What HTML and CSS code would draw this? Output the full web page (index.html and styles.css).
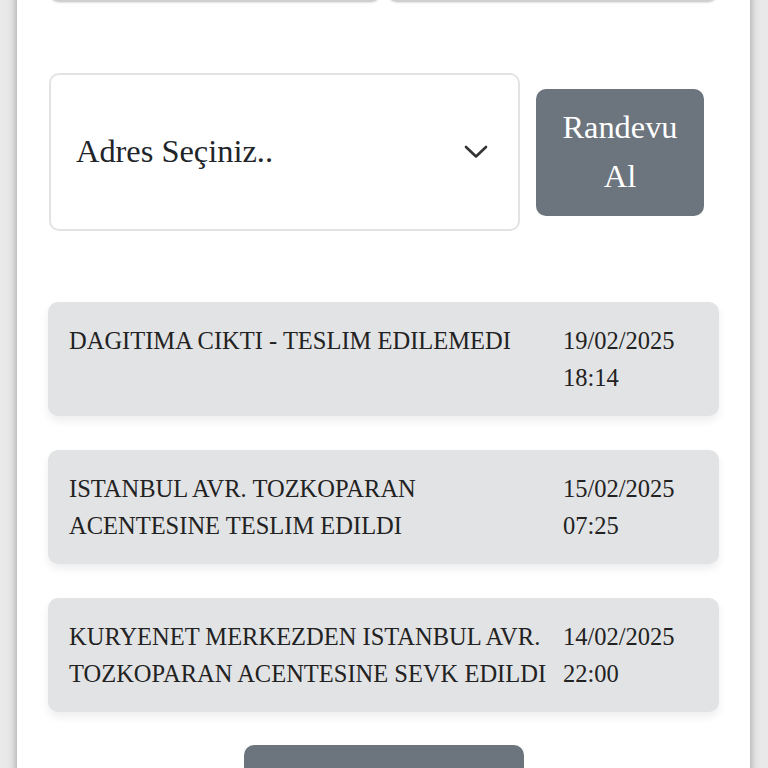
FILE: index.html
```html
<!DOCTYPE html>
<html lang="tr">
<head>
<meta charset="utf-8">
<title>Kargo Takip</title>
<link rel="stylesheet" href="styles.css">
</head>
<body>
<div class="page">
  <main class="card">
    <div class="top-row">
      <div class="field"></div>
      <div class="field"></div>
    </div>

    <div class="address-row">
      <div class="select">
        <span class="select-text">Adres Seçiniz..</span>
        <svg class="chevron" width="24" height="14" viewBox="0 0 24 14" aria-hidden="true">
          <path d="M2 2 L12 11.5 L22 2" fill="none" stroke="#333" stroke-width="2.6" stroke-linecap="round" stroke-linejoin="round"/>
        </svg>
      </div>
      <button class="btn-appointment">Randevu Al</button>
    </div>

    <ul class="events">
      <li class="event">
        <div class="event-desc">DAGITIMA CIKTI - TESLIM EDILEMEDI</div>
        <div class="event-date">19/02/2025<br>18:14</div>
      </li>
      <li class="event">
        <div class="event-desc">ISTANBUL AVR. TOZKOPARAN ACENTESINE TESLIM EDILDI</div>
        <div class="event-date">15/02/2025<br>07:25</div>
      </li>
      <li class="event">
        <div class="event-desc">KURYENET MERKEZDEN ISTANBUL AVR. TOZKOPARAN ACENTESINE SEVK EDILDI</div>
        <div class="event-date">14/02/2025<br>22:00</div>
      </li>
    </ul>

    <div class="bottom-row">
      <button class="btn-bottom"></button>
    </div>
  </main>
</div>
</body>
</html>
```

FILE: styles.css
```css
html, body {
  margin: 0;
  padding: 0;
  height: 768px;
  overflow: hidden;
  background: #e9e9e9;
  font-family: "Liberation Serif", "Times New Roman", serif;
  color: #212529;
}

.page {
  padding-left: 17px;
}

.card {
  width: 733px;
  min-height: 900px;
  box-sizing: border-box;
  background: #ffffff;
  padding: 0 31px;
  box-shadow: 0 0 9px rgba(0, 0, 0, 0.35);
}

.top-row {
  display: flex;
  gap: 6px;
  margin-top: -50px;
  padding: 0 1px 0 1px;
}

.field {
  flex: 1;
  height: 48px;
  border: 2px solid #cfcfcf;
  border-radius: 10px;
  box-shadow: 0 1px 2px rgba(0, 0, 0, 0.12);
}

.address-row {
  display: flex;
  align-items: center;
  margin-top: 71px;
}

.select {
  width: 471px;
  height: 158px;
  box-sizing: border-box;
  margin-left: 1px;
  border: 2px solid #e3e3e3;
  border-radius: 10px;
  display: flex;
  align-items: center;
  justify-content: space-between;
  padding: 0 30px 0 25px;
  font-size: 32.4px;
}

.select-text {
  padding-bottom: 2px;
}

.chevron {
  display: block;
}

.btn-appointment {
  margin-left: 16px;
  width: 168px;
  height: 127px;
  border: none;
  border-radius: 10px;
  background: #6c757d;
  color: #ffffff;
  font-family: inherit;
  font-size: 32.4px;
  line-height: 49px;
  padding: 0 22px;
  text-align: center;
}

.events {
  list-style: none;
  margin: 71px 0 0;
  padding: 0;
  display: flex;
  flex-direction: column;
  gap: 34px;
}

.event {
  display: flex;
  gap: 10px;
  background: #e2e3e5;
  border-radius: 10px;
  padding: 20px 21px;
  min-height: 74px;
  font-size: 24.5px;
  line-height: 37px;
  color: #222;
  box-shadow: 0 5px 8px rgba(0, 0, 0, 0.07);
}

.event-desc {
  flex: 1;
}

.event-date {
  width: 135px;
  flex: none;
}

.bottom-row {
  display: flex;
  justify-content: center;
  margin-top: 33px;
}

.btn-bottom {
  width: 280px;
  height: 60px;
  border: none;
  border-radius: 10px;
  background: #6c757d;
}
```
